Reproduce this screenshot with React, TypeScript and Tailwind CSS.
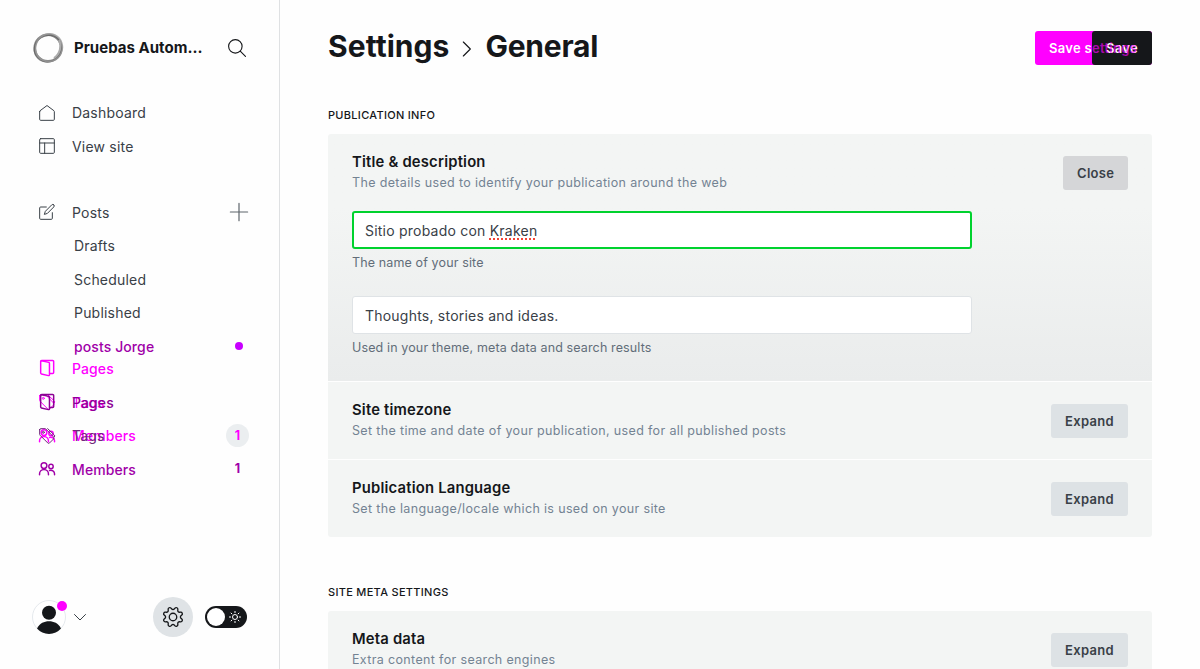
import type { ReactNode } from 'react';

function Icon({ children, className, width = 1.5 }: { children: ReactNode; className: string; width?: number }) {
  return (
    <svg
      viewBox="0 0 24 24"
      fill="none"
      stroke="currentColor"
      strokeWidth={width}
      strokeLinecap="round"
      strokeLinejoin="round"
      className={`shrink-0 overflow-visible ${className}`}
    >
      {children}
    </svg>
  );
}

const home = <path d="M1 9.8V21.5a1.5 1.5 0 0 0 1.5 1.5h19a1.5 1.5 0 0 0 1.5-1.5V9.8a1.5 1.5 0 0 0-.6-1.2L12 .8 1.6 8.6a1.5 1.5 0 0 0-.6 1.2z" />;
const layout = (
  <>
    <rect x="1" y="1" width="22" height="22" rx="1.5" />
    <path d="M1 7.5h22M8.5 7.5V23" />
  </>
);
const pen = (
  <>
    <path d="M20 13v8.500a1.500 1.500 0 0 1-1.500 1.500h-16A1.500 1.500 0 0 1 1 21.500V6A1.500 1.500 0 0 1 2.500 4.500H11" />
    <path d="M22.200 1.300a2.200 2.200 0 0 0-3.100 0L9.500 11l-1.500 4.600 4.600-1.500 9.600-9.700a2.200 2.200 0 0 0 0-3.100z" />
  </>
);
const pages = (
  <>
    <path d="M2.500 2v17.500a1.500 1.500 0 0 0 1.200 1.400l10.500 2.500a1.200 1.200 0 0 0 1.500-1.200V5a1.500 1.500 0 0 0-1.100-1.400L4 1" />
    <path d="M2.500 2.200A1.500 1.500 0 0 1 4 .8h16.500A1.500 1.500 0 0 1 22 2.300v16.500a1.500 1.500 0 0 1-1.500 1.500h-4.500" />
  </>
);
const tags = (
  <>
    <path d="M1 2.500v7a2 2 0 0 0 .6 1.400l11.500 11.500a2 2 0 0 0 2.800 0l6-6a2 2 0 0 0 0-2.800L10.400 1.600A2 2 0 0 0 9 1H2.500A1.500 1.500 0 0 0 1 2.500z" />
    <circle cx="6.500" cy="6.500" r="1.500" />
    <path d="M13 1l10 9.500a2 2 0 0 1 .3 2.500" />
  </>
);
const members = (
  <>
    <circle cx="7.500" cy="6.800" r="4.300" />
    <path d="M.8 20.500v-1a6.700 6.700 0 0 1 13.400 0v1" />
    <circle cx="18" cy="8.200" r="3.300" />
    <path d="M15.800 14.200a5.500 5.500 0 0 1 7.500 5.100v1.200" />
  </>
);

function NavRow({ icon, label, bold, children }: { icon?: ReactNode; label: string; bold?: boolean; children?: ReactNode }) {
  return (
    <div className="relative flex h-[33.600px] items-center">
      {icon ? (
        <Icon className="mr-[17px] size-4" width={bold ? 2.200 : 1.500}>
          {icon}
        </Icon>
      ) : (
        <span className="w-[35px]" />
      )}
      <span className={bold ? 'pt-[0.400px] font-medium tracking-[0.100px]' : 'pt-[0.200px]'}>{label}</span>
      {children}
    </div>
  );
}

function Sidebar() {
  return (
    <aside className="flex h-full w-[280px] shrink-0 flex-col border-r border-[#dfe1e3] pl-8 pr-8 text-[14px] tracking-[0.200px] text-[#394047]">
      <div className="mt-8 flex h-8 items-center">
        <svg viewBox="0 0 32 32" className="size-8 shrink-0" fill="none">
          <circle cx="16" cy="16" r="13.300" stroke="#888" strokeWidth="2.600" />
          <ellipse cx="15.600" cy="16.500" rx="14" ry="13" stroke="#555" strokeOpacity=".6" strokeWidth="1.300" transform="rotate(-35 16 16)" />
          <ellipse cx="16.800" cy="15.300" rx="13.300" ry="14" stroke="#999" strokeOpacity=".8" strokeWidth="1.500" transform="rotate(25 16 16)" />
          <path d="M27 8c3 6 1 14-5 18" stroke="#aaa" strokeWidth="2" />
        </svg>
        <span className="ml-[10px] whitespace-nowrap text-[15px] font-bold tracking-[0.020px] text-[#15171a]">Pruebas Autom...</span>
        <Icon className="ml-auto mr-[1px] size-[18px] text-[#15171a]">
          <circle cx="9.800" cy="9.800" r="9" />
          <path d="M16.300 16.300l7 7" />
        </Icon>
      </div>

      <nav className="mt-[32px] pl-[7px]">
        <NavRow icon={home} label="Dashboard" />
        <NavRow icon={layout} label="View site" />
      </nav>

      <nav className="mt-[32px] pl-[7px]">
        <NavRow icon={pen} label="Posts">
          <Icon className="-mr-px ml-auto size-[18px] text-[#5d646b]" width={1.600}>
            <path d="M12 .5v23M.5 12h23" />
          </Icon>
        </NavRow>
        <NavRow label="Drafts" />
        <NavRow label="Scheduled" />
        <NavRow label="Published" />
        <div className="text-[#a000a8]">
          <NavRow label="posts Jorge" bold>
            <span className="ml-auto mr-[4px] size-2 rounded-full bg-[#c800ff]" />
          </NavRow>
        </div>
        <div className="-mt-[11.600px] text-[#f0f]">
          <NavRow icon={pages} label="Pages" bold />
        </div>
        <div className="relative">
          <div className="text-[#f0f]">
            <NavRow icon={tags} label="Tags" />
          </div>
          <div className="absolute inset-0 text-[#8c0094]">
            <NavRow icon={pages} label="Pages" bold />
          </div>
        </div>
        <div className="relative">
          <div className="text-[#f0f]">
            <NavRow icon={members} label="Members" bold>
              <span className="-mr-[2px] ml-auto flex size-[23px] items-center justify-center rounded-full bg-[#ebeef0] pt-px text-[12.500px] font-bold">1</span>
            </NavRow>
          </div>
          <div className="absolute inset-0 text-[#70287a]">
            <NavRow icon={tags} label="Tags" />
          </div>
        </div>
        <div className="text-[#a000a8]">
          <NavRow icon={members} label="Members" bold>
            <span className="-mr-[2px] ml-auto flex size-[23px] items-center justify-center pt-px text-[12.500px] font-bold">1</span>
          </NavRow>
        </div>
      </nav>

      <div className="mb-8 mt-auto flex h-10 items-center">
        <div className="relative">
          <svg viewBox="0 0 34 34" className="size-[34px]">
            <circle cx="17" cy="17" r="16.500" fill="#fff" stroke="#e5e9ed" />
            <circle cx="17" cy="12.800" r="7" fill="#15171a" />
            <path d="M5 28.500C8 23.200 12 21.300 17 21.300s9 1.900 12 7.200A16 16 0 0 1 5 28.500z" fill="#15171a" />
          </svg>
          <span className="absolute left-[25px] top-[1px] size-[10px] rounded-full bg-[#f0f]" />
        </div>
        <Icon className="ml-2 size-3 text-[#394047]" width={2}>
          <path d="M1 7l11 11L23 7" />
        </Icon>
        <div className="ml-auto flex size-10 items-center justify-center rounded-full bg-[#dfe3e6] text-[#15171a]">
          <Icon className="size-5" width={1.600}>
            <path d="M10.546 2.438a1.957 1.957 0 0 0 2.908 0L14.400 1.400a1.959 1.959 0 0 1 3.410 1.413l-.071 1.400A1.958 1.958 0 0 0 19.790 6.270l1.400-.071A1.959 1.959 0 0 1 22.600 9.608l-1.040.940a1.958 1.958 0 0 0 0 2.907l1.040.945a1.959 1.959 0 0 1-1.413 3.410l-1.400-.071a1.958 1.958 0 0 0-2.056 2.056l.071 1.400A1.959 1.959 0 0 1 14.400 22.600l-.941-1.041a1.959 1.959 0 0 0-2.908 0L9.606 22.600A1.959 1.959 0 0 1 6.200 21.192l.072-1.400a1.958 1.958 0 0 0-2.056-2.056l-1.400.071A1.958 1.958 0 0 1 1.400 14.400l1.041-.940a1.958 1.958 0 0 0 0-2.907L1.400 9.608A1.958 1.958 0 0 1 2.809 6.200l1.400.071a1.958 1.958 0 0 0 2.058-2.060L6.200 2.810A1.959 1.959 0 0 1 9.606 1.400z" />
            <circle cx="12" cy="12" r="4.500" />
          </Icon>
        </div>
        <div className="ml-3 flex h-[22px] w-[42px] items-center justify-between rounded-full bg-[#15171a] pl-[2px] pr-[6px]">
          <span className="size-[18px] rounded-full bg-white" />
          <Icon className="size-3 text-white" width={2}>
            <circle cx="12" cy="12" r="5" />
            <path d="M12 .8v2.400M12 20.800v2.400M.8 12h2.400M20.800 12h2.400M4.100 4.100l1.700 1.700M18.200 18.200l1.700 1.700M4.100 19.900l1.700-1.700M18.200 5.800l1.700-1.700" />
          </Icon>
        </div>
      </div>
    </aside>
  );
}

function SettingHead({ title, text, action }: { title: string; text: string; action: string }) {
  return (
    <div className="flex items-start justify-between">
      <div className="-mt-[5px]">
        <h3 className="text-[14.800px] font-semibold leading-[22px] tracking-[0.200px] text-[#15171a]">{title}</h3>
        <p className="-mb-px text-[12.500px] leading-5 tracking-[0.350px] text-[#738393]">{text}</p>
      </div>
      <button
        className={`h-[34px] rounded-[3px] px-[14px] pt-px text-[13px] font-semibold tracking-[0.300px] text-[#394047] ${action === 'Close' ? 'w-[65px] bg-[#d5d6d8]' : 'w-[77px] bg-[#dde2e5]'}`}
      >
        {action}
      </button>
    </div>
  );
}

function SectionTitle({ children }: { children: ReactNode }) {
  return <h2 className="text-[11px] font-medium uppercase leading-[14px] tracking-[0.300px] text-[#15171a]">{children}</h2>;
}

export default function App() {
  return (
    <div className="flex h-[669px] w-[1200px] overflow-hidden bg-[#fefefe] font-['Inter',sans-serif] antialiased">
      <Sidebar />
      <main className="flex-1 px-12">
        <header className="flex h-[96px] items-center justify-between">
          <h1 className="-mt-[4px] flex items-center text-[30px] font-bold text-[#15171a]">
            <span className="tracking-[0.060px]">Settings</span>
            <Icon className="mx-[10px] mt-[5px] size-4" width={1.700}>
              <path d="M6.500 1.500L17 12 6.500 22.500" />
            </Icon>
            <span className="tracking-[-0.250px]">General</span>
          </h1>
          <div className="relative h-[34px] w-[117px] rounded-[3px] bg-[#f0f] text-[13px] font-semibold leading-[34px] tracking-[0.300px] text-white">
            <span className="whitespace-nowrap pl-[14px]">Save settings</span>
            <div className="absolute right-0 top-0 h-[34px] w-[60px] overflow-hidden rounded-[3px] bg-[#15171a]">
              <span className="pl-[14px]">Save</span>
              <span className="absolute left-[-43px] top-0 whitespace-nowrap text-[#f0f] opacity-65">Save settings</span>
            </div>
          </div>
        </header>

        <div className="mt-3">
          <SectionTitle>Publication info</SectionTitle>
        </div>
        <section className="mt-3 overflow-hidden rounded-[3px]">
          <div className="h-[247px] bg-linear-to-b from-[#f3f5f4] from-30% to-[#eaecec] px-6 pt-[22px]">
            <SettingHead title="Title & description" text="The details used to identify your publication around the web" action="Close" />
            <div className="mt-[19px] w-[620px] text-[14px] tracking-[0.220px] text-[#394047]">
              <div className="flex h-[38px] items-center rounded-[3px] border-2 border-[#00d22e] bg-white pl-[11px] pt-px">
                <span>
                  Sitio probado con{' '}
                  <span className="underline decoration-[#f44336] decoration-dotted decoration-2 underline-offset-2">Kraken</span>
                </span>
              </div>
              <p className="mt-1 text-[12.500px] leading-5 tracking-[0.130px] text-[#626d79]">The name of your site</p>
              <div className="mt-[23px] flex h-[38px] items-center rounded-[3px] border border-[#dfe3e6] bg-white pl-3 pt-px">
                Thoughts, stories and ideas.
              </div>
              <p className="mt-1 text-[12.500px] leading-5 tracking-[0.130px] text-[#626d79]">Used in your theme, meta data and search results</p>
            </div>
          </div>
          <div className="mt-px h-[77px] bg-[#f3f5f4] px-6 pt-[22px]">
            <SettingHead title="Site timezone" text="Set the time and date of your publication, used for all published posts" action="Expand" />
          </div>
          <div className="mt-px h-[77px] bg-[#f3f5f4] px-6 pt-[22px]">
            <SettingHead title="Publication Language" text="Set the language/locale which is used on your site" action="Expand" />
          </div>
        </section>

        <div className="mt-12">
          <SectionTitle>Site meta settings</SectionTitle>
        </div>
        <section className="mt-3 h-[77px] rounded-t-[3px] bg-[#f3f5f4] px-6 pt-[22px]">
          <SettingHead title="Meta data" text="Extra content for search engines" action="Expand" />
        </section>
      </main>
    </div>
  );
}
